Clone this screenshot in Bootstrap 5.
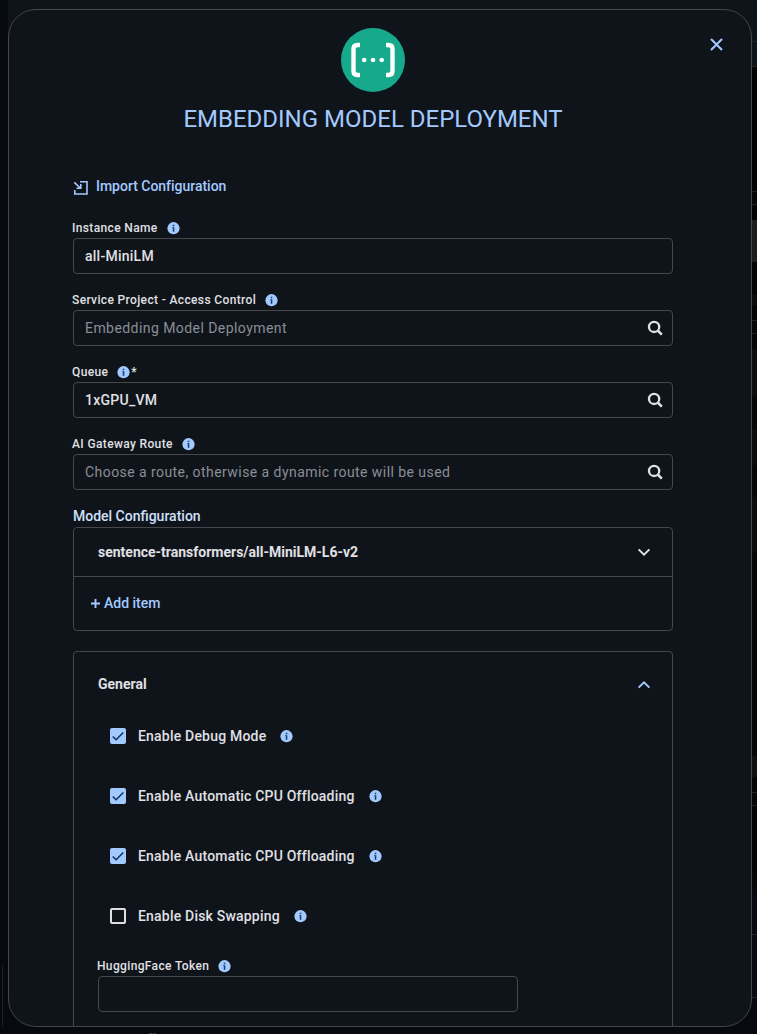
<!DOCTYPE html>
<html lang="en" data-bs-theme="dark">
<head>
<meta charset="utf-8">
<meta name="viewport" content="width=device-width, initial-scale=1">
<title>Embedding Model Deployment</title>
<link href="https://cdn.jsdelivr.net/npm/bootstrap@5.3.0/dist/css/bootstrap.min.css" rel="stylesheet">
<script src="https://cdn.jsdelivr.net/npm/bootstrap@5.3.0/dist/js/bootstrap.bundle.min.js" defer></script>
<style>
  :root { --line: #45474b; --blue: #a3c9ff; --ink: #e0e0e4; --surface: #0f141b; }
  body { margin: 0; height: 1034px; overflow: hidden; background: #06090d; color: var(--ink); font: 500 14px/20px Roboto, sans-serif; }
  /* dimmed page behind the dialog */
  .backdrop-page { height: 1034px; padding: 9px 5px 7px 8px;
    background:
      linear-gradient(#1c1f23,#1c1f23) 2px 965px/1px 62px no-repeat,
      linear-gradient(#0f131a,#0f131a) 8px 0/749px 9px no-repeat,
      linear-gradient(#0f131a,#0f131a) 8px 9px/30px 30px no-repeat,
      linear-gradient(#3a3c40,#3a3c40) 149px 1033px/3px 1px no-repeat,
      linear-gradient(#3a3c40,#3a3c40) 153px 1033px/3px 1px no-repeat,
      linear-gradient(#06090d,#06090d) 0 1027px/757px 7px no-repeat,
      linear-gradient(#0e1219 0 41px,#202327 41px 42px,#0e1219 42px 66px,#202327 66px 67px,#010204 67px 191px,#202327 191px 192px,#05070a 192px 204px,#202327 204px 205px,#010203 205px 220px,#1b1d20 220px 262px,#020406 262px 295px,#0a0d10 295px 305px,#020406 305px 320px,#1d2023 320px 321px,#040608 321px 333px,#1d2023 333px 334px,#030506 334px 349px,#0a0e11 349px 396px,#05080a 396px 430px,#0a0d10 430px 465px,#040608 465px 497px,#0a0d10 497px 552px,#040608 552px 756px,#0c1013 756px 777px,#030507 777px 792px,#1f2225 792px 793px,#040608 793px 805px,#1f2225 805px 806px,#020406 806px 860px,#070a0e 900px 934px,#202327 934px 935px,#070a0e 935px 997px,#202327 997px 998px,#06090d 998px) 100% 0/28px 100% no-repeat; }
  .dialog { height: 1018px; border: 1px solid var(--line); border-radius: 28px; background: var(--surface); overflow: hidden; padding: 18px 78px 0 64px; }
  .btn-x { top: 28px; right: 28px; line-height: 0; color: var(--blue); }
  .dialog svg { display: block; flex: none; }
  .title { font-size: 24px; line-height: 32px; font-weight: 400; color: var(--blue); margin: 11px 0 0; }
  .accent { color: var(--blue); }
  .import-link { margin: 40px 0 23px; height: 22px; gap: 7px; letter-spacing: -.02px; }
  .field-label { font-size: 12px; line-height: 16px; letter-spacing: .36px; margin-left: -1px; height: 16px; }
  .field-label svg { margin-left: 9px; }
  .field-label span { margin-left: 1px; }
  .field-box { height: 36px; border: 1px solid var(--line); border-radius: 4px; padding: 0 9px 0 11px; letter-spacing: .25px; margin-top: 2px; }
  .field { margin-bottom: 18px; }
  .hint { color: #8b8e94; font-weight: 400; letter-spacing: .44px; }
  .panel { border: 1px solid var(--line); border-radius: 4px; }
  .panel-row { padding: 0 20px 0 24px; font-weight: 700; }
  .section-name { color: #cfe0fb; margin-top: -2px; height: 21px; }
  .models { height: 104px; }
  .model-head { height: 49px; border-color: var(--line) !important; }
  .model-head svg, .general-head svg { margin-top: -1px; }
  .add-item { height: 51px; padding-left: 17px; gap: 4px; }
  .add-item svg { margin-top: 2px; }
  .general { margin-top: 20px; height: 420px; }
  .general-head { height: 64px; margin-bottom: -10px; }
  .check-row { height: 60px; padding-left: 36px; letter-spacing: .2px; }
  .check-row > svg { margin-left: 14px; }
  .tick { width: 16px; height: 16px; border-radius: 2px; margin-right: 12px; }
  .tick.on { background: var(--blue); }
  .tick.off { border: 2px solid var(--ink); }
  .token { margin: 12px 0 0 24px; width: 420px; }
</style>
</head>
<body>
<svg width="0" height="0" class="position-absolute">
  <symbol id="info" viewBox="0 0 13 13"><circle cx="6.500" cy="6.200" r="6.100" fill="#a3c9ff"/><path fill="#123d69" d="M5.800 2.800h1.500v1.500H5.800zM5.100 5.200h2.200v4.500H5.800V6.100h-.7z"/></symbol>
  <symbol id="search" viewBox="0 0 16 16"><circle cx="7.100" cy="6.900" r="5.100" fill="none" stroke="#dfe1e8" stroke-width="2.300"/><path d="m10.700 10.500 4.100 4.100" stroke="#dfe1e8" stroke-width="2.500"/></symbol>
  <symbol id="check" viewBox="0 0 16 16"><path d="m2.800 8.500 3.300 3.200 7.200-7.200" fill="none" stroke="#07365f" stroke-width="1.600"/></symbol>
</svg>
<div class="backdrop-page">
  <main class="dialog position-relative">
    <a class="btn-x position-absolute" role="button" aria-label="Close"><svg width="13" height="13" viewBox="0 0 13 13"><path d="m1 1 11 11M12 1 1 12" stroke="currentColor" stroke-width="2.100"/></svg></a>
    <header class="d-flex flex-column align-items-center">
      <svg width="64" height="64" viewBox="0 0 64 64"><circle cx="32" cy="32" r="32" fill="#17a98b"/><path d="M19 17h-2.500q-4 0-4 4v22q0 4 4 4H19M45 17h2.500q4 0 4 4v22q0 4-4 4H45" fill="none" stroke="#fff" stroke-width="4.400"/><g fill="#fff"><circle cx="23.200" cy="32" r="2.300"/><circle cx="32" cy="32" r="2.300"/><circle cx="40.700" cy="32" r="2.300"/></g></svg>
      <h1 class="title text-nowrap">EMBEDDING MODEL DEPLOYMENT</h1>
    </header>
    <div class="import-link d-flex align-items-center accent">
      <svg width="16" height="16" viewBox="0 0 16 16" class="mt-1" fill="none" stroke="currentColor" stroke-width="1.600"><path d="M7 1.800h7v12.200H1.800V10M1.300 2.300l6 5.700M3.500 8.300h4.300V4"/></svg>
      <span>Import Configuration</span>
    </div>
    <div class="field">
      <div class="field-label d-flex align-items-center">Instance Name<svg width="13" height="13"><use href="#info"/></svg></div>
      <div class="field-box d-flex align-items-center">all-MiniLM</div>
    </div>
    <div class="field">
      <div class="field-label d-flex align-items-center">Service Project - Access Control<svg width="13" height="13"><use href="#info"/></svg></div>
      <div class="field-box d-flex align-items-center justify-content-between"><span class="hint">Embedding Model Deployment</span><svg width="16" height="16"><use href="#search"/></svg></div>
    </div>
    <div class="field">
      <div class="field-label d-flex align-items-center">Queue<svg width="13" height="13"><use href="#info"/></svg><span>*</span></div>
      <div class="field-box d-flex align-items-center justify-content-between">1xGPU_VM<svg width="16" height="16"><use href="#search"/></svg></div>
    </div>
    <div class="field">
      <div class="field-label d-flex align-items-center">AI Gateway Route<svg width="13" height="13"><use href="#info"/></svg></div>
      <div class="field-box d-flex align-items-center justify-content-between"><span class="hint">Choose a route, otherwise a dynamic route will be used</span><svg width="16" height="16"><use href="#search"/></svg></div>
    </div>
    <div class="section-name">Model Configuration</div>
    <section class="panel models">
      <div class="panel-row model-head d-flex align-items-center justify-content-between border-bottom">sentence-transformers/all-MiniLM-L6-v2<svg width="16" height="16" viewBox="0 0 16 16"><path d="m2.600 5.300 5.400 5.400 5.400-5.400" fill="none" stroke="#e2e2e6" stroke-width="1.900"/></svg></div>
      <div class="add-item d-flex align-items-center accent"><svg width="9" height="9" viewBox="0 0 9 9"><path d="M4.500 0v9M0 4.500h9" stroke="currentColor" stroke-width="1.900"/></svg>Add item</div>
    </section>
    <section class="panel general">
      <div class="panel-row general-head d-flex align-items-center justify-content-between">General<svg width="16" height="16" viewBox="0 0 16 16"><path d="m2.600 11.700 5.400-5.400 5.400 5.400" fill="none" stroke="#a3c9ff" stroke-width="1.900"/></svg></div>
      <div class="check-row d-flex align-items-center"><span class="tick on"><svg width="16" height="16"><use href="#check"/></svg></span>Enable Debug Mode<svg width="13" height="13"><use href="#info"/></svg></div>
      <div class="check-row d-flex align-items-center"><span class="tick on"><svg width="16" height="16"><use href="#check"/></svg></span>Enable Automatic CPU Offloading<svg width="13" height="13"><use href="#info"/></svg></div>
      <div class="check-row d-flex align-items-center"><span class="tick on"><svg width="16" height="16"><use href="#check"/></svg></span>Enable Automatic CPU Offloading<svg width="13" height="13"><use href="#info"/></svg></div>
      <div class="check-row d-flex align-items-center"><span class="tick off"></span>Enable Disk Swapping<svg width="13" height="13"><use href="#info"/></svg></div>
      <div class="token">
        <div class="field-label d-flex align-items-center">HuggingFace Token<svg width="13" height="13"><use href="#info"/></svg></div>
        <div class="field-box"></div>
      </div>
    </section>
  </main>
</div>
</body>
</html>
